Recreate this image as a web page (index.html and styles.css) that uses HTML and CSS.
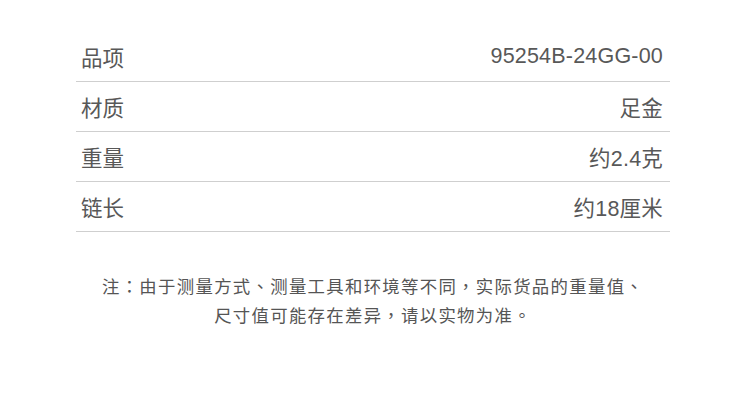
FILE: index.html
```html
<!DOCTYPE html>
<html lang="zh-CN">
<head>
    <meta charset="UTF-8">
    <meta name="viewport" content="width=device-width, initial-scale=1.0">
    <title>商品参数</title>
    <link rel="stylesheet" href="styles.css">
</head>
<body>
    <div class="spec">
        <div class="spec-row">
            <span class="spec-name">品项</span>
            <span class="spec-value">95254B-24GG-00</span>
        </div>
        <div class="spec-row">
            <span class="spec-name">材质</span>
            <span class="spec-value">足金</span>
        </div>
        <div class="spec-row">
            <span class="spec-name">重量</span>
            <span class="spec-value">约2.4克</span>
        </div>
        <div class="spec-row">
            <span class="spec-name">链长</span>
            <span class="spec-value">约18厘米</span>
        </div>
        <p class="note" lang="zh-Hant">注：由于测量方式、测量工具和环境等不同，实际货品的重量值、<br>尺寸值可能存在差异，请以实物为准。</p>
    </div>
</body>
</html>
```

FILE: styles.css
```css
body {
    margin: 0;
    background-color: #fff;
    font-family: "Liberation Sans", "Noto Sans CJK SC", sans-serif;
    color: #585858;
}
.spec {
    width: 594px;
    margin: 0 0 0 76px;
    padding-top: 32px;
}
.spec-row {
    display: flex;
    justify-content: space-between;
    align-items: center;
    height: 49px;
    padding: 0 7px 0 5px;
    border-bottom: 1px solid #cfcfcf;
    font-size: 21.5px;
}
.spec-value {
    letter-spacing: 0.2px;
}
.note {
    margin: 39px 0 0;
    text-align: center;
    font-family: "Noto Sans CJK TC", "Noto Sans CJK SC", sans-serif;
    font-size: 17.4px;
    line-height: 29px;
    letter-spacing: 1.3px;
    color: #555;
}
```
